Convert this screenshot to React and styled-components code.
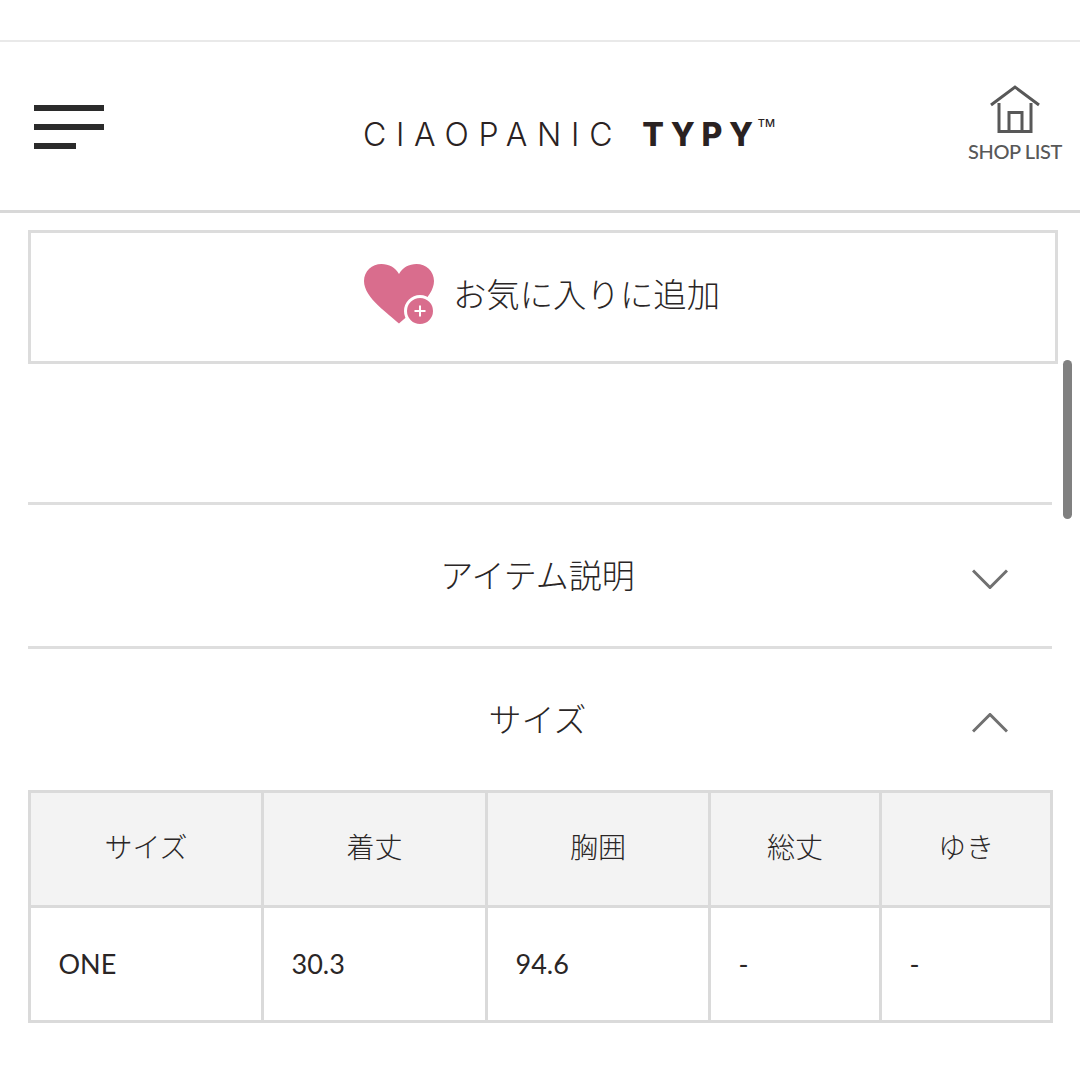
import styled, { createGlobalStyle } from "styled-components";

const GlobalStyle = createGlobalStyle`
  html, body {
    margin: 0;
    padding: 0;
    background: #fff;
  }
  body {
    font-family: "Lato", "Noto Sans CJK JP", sans-serif;
    color: #2a2626;
  }
`;

const Page = styled.div`
  position: relative;
  width: 1080px;
  height: 1080px;
  overflow: hidden;
  background: #fff;
`;

const TopStrip = styled.div`
  height: 40px;
  border-bottom: 2px solid #e9e9e9;
`;

const Header = styled.header`
  display: flex;
  align-items: center;
  height: 168px;
  padding: 0 18px 0 34px;
  border-bottom: 3px solid #d8d8d8;
`;

const Menu = styled.div`
  display: flex;
  flex-direction: column;
  gap: 13px;
  width: 70px;
  margin-top: 1px;
`;

const MenuBar = styled.span`
  display: block;
  height: 6px;
  width: ${(p) => p.$w}px;
  background: #2b2b2b;
`;

const Logo = styled.div`
  display: flex;
  align-items: flex-start;
  margin: 17px 0 0 259px;
  font-family: "Inter", sans-serif;
  font-size: 32px;
  line-height: 38px;
  color: #2a2222;
  white-space: nowrap;
`;

const LogoLight = styled.span`
  font-weight: 300;
  letter-spacing: 9.7px;
`;

const LogoBold = styled.span`
  font-weight: 800;
  letter-spacing: 6.7px;
  margin-left: 20px;
`;

const LogoMark = styled.span`
  font-size: 11px;
  line-height: 14px;
  font-weight: 500;
  margin-left: -2px;
`;

const ShopLink = styled.div`
  display: flex;
  flex-direction: column;
  align-items: center;
  margin-left: auto;
  margin-top: -5px;
  width: 94px;
`;

const ShopLabel = styled.span`
  margin-top: 5px;
  font-family: "Lato", sans-serif;
  font-size: 20px;
  line-height: 24px;
  font-weight: 500;
  letter-spacing: -0.4px;
  color: #585858;
  white-space: nowrap;
`;

const FavButton = styled.div`
  display: flex;
  align-items: center;
  justify-content: center;
  gap: 18px;
  box-sizing: border-box;
  width: 1030px;
  height: 134px;
  margin: 17px 0 0 28px;
  padding: 0 3px 7px 0;
  border: 3px solid #dcdcdc;
  font-size: 33px;
`;

const FavLabel = styled.span`
  font-weight: 300;
  font-size: 33.4px;
  margin-top: -3px;
`;

const Accordion = styled.div`
  width: 1024px;
  margin: 138px 0 0 28px;
`;

const AccordionRow = styled.div`
  position: relative;
  display: flex;
  align-items: center;
  justify-content: center;
  box-sizing: border-box;
  height: 144px;
  border-top: 3px solid #dedede;
  padding: 0 5px 3px 0;
  font-size: 33px;
  font-weight: 300;
`;

const Chevron = styled.svg`
  position: absolute;
  right: 44px;
  top: ${(p) => p.$top}px;
`;

const SizeTable = styled.table`
  width: 1022px;
  margin: 0 0 0 28px;
  border-collapse: collapse;
  table-layout: fixed;
  border: 3px solid #dadada;
`;

const HeadCell = styled.th`
  height: 115px;
  padding: 0 0 6px;
  box-sizing: border-box;
  border: 3px solid #dadada;
  background: #f3f3f3;
  font-size: 28px;
  font-weight: 300;
  text-align: center;
`;

const BodyCell = styled.td`
  height: 115px;
  padding: 0 0 2px 27.5px;
  box-sizing: border-box;
  border: 3px solid #dadada;
  font-size: 27px;
  font-weight: 400;
`;

const ScrollThumb = styled.div`
  position: absolute;
  top: 360px;
  left: 1063px;
  width: 9px;
  height: 159px;
  border-radius: 5px;
  background: #808080;
`;

const HomeIcon = () => (
  <svg width="52" height="49" viewBox="0 0 52 49" fill="none" stroke="#585858" strokeWidth="3">
    <path d="M2 20 L26 2 L50 20" />
    <path d="M10 18 V46.5 H42 V18" />
    <path d="M20 46.5 V27.5 H33 V46.5" />
  </svg>
);

const HeartIcon = () => (
  <svg width="72" height="62" viewBox="0 0 72 62">
    <path
      d="M36 60.5 C26 51 1 35 1 18 C1 8 9 1 18.5 1 C26 1 32.5 4.5 36 11 C39.5 4.5 46 1 53.5 1 C63 1 71 8 71 18 C71 35 46 51 36 60.5 Z"
      fill="#d96d8d"
    />
    <circle cx="57" cy="48" r="14.5" fill="#d96d8d" stroke="#fff" strokeWidth="3" />
    <path d="M51.5 48 H62.5 M57 42.5 V53.5" stroke="#fff" strokeWidth="2" />
  </svg>
);

const ChevronIcon = ({ up, top }) => (
  <Chevron $top={top} width="36" height="20" viewBox="0 0 36 20" fill="none" stroke="#707070" strokeWidth="3">
    <path d={up ? "M1 18.5 L18 1.5 L35 18.5" : "M1 1.5 L18 18.5 L35 1.5"} />
  </Chevron>
);

const columns = [233, 224, 223, 171, 171];
const heads = ["サイズ", "着丈", "胸囲", "総丈", "ゆき"];
const values = ["ONE", "30.3", "94.6", "-", "-"];

export default function App() {
  return (
    <Page>
      <GlobalStyle />
      <TopStrip />
      <Header>
        <Menu>
          <MenuBar $w={70} />
          <MenuBar $w={70} />
          <MenuBar $w={42} />
        </Menu>
        <Logo>
          <LogoLight>CIAOPANIC</LogoLight>
          <LogoBold>TYPY</LogoBold>
          <LogoMark>TM</LogoMark>
        </Logo>
        <ShopLink>
          <HomeIcon />
          <ShopLabel>SHOP LIST</ShopLabel>
        </ShopLink>
      </Header>
      <FavButton>
        <HeartIcon />
        <FavLabel>お気に入りに追加</FavLabel>
      </FavButton>
      <Accordion>
        <AccordionRow>
          アイテム説明
          <ChevronIcon top={64} />
        </AccordionRow>
        <AccordionRow>
          サイズ
          <ChevronIcon up top={64} />
        </AccordionRow>
      </Accordion>
      <SizeTable>
        <colgroup>
          {columns.map((w, i) => (
            <col key={i} style={{ width: w }} />
          ))}
        </colgroup>
        <thead>
          <tr>
            {heads.map((h) => (
              <HeadCell key={h}>{h}</HeadCell>
            ))}
          </tr>
        </thead>
        <tbody>
          <tr>
            {values.map((v, i) => (
              <BodyCell key={i}>{v}</BodyCell>
            ))}
          </tr>
        </tbody>
      </SizeTable>
      <ScrollThumb />
    </Page>
  );
}
